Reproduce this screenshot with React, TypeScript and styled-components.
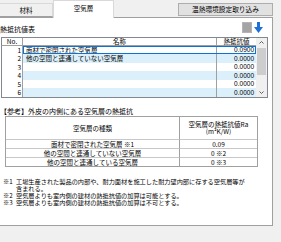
import React from 'react';
import styled, { createGlobalStyle } from 'styled-components';

const GlobalStyle = createGlobalStyle`
  html, body {
    margin: 0;
    padding: 0;
    background: #f0f0f0;
  }
  body {
    font-family: "Noto Sans CJK JP", "Noto Sans", sans-serif;
    color: #000;
  }
`;

const Screen = styled.div`
  width: 281px;
  height: 242px;
  overflow: hidden;
  background: #f0f0f0;
`;

const TabStrip = styled.div`
  display: flex;
  align-items: flex-end;
  height: 17px;
`;

const Tab = styled.div<{ $active?: boolean }>`
  box-sizing: border-box;
  position: relative;
  z-index: ${(p) => (p.$active ? 2 : 1)};
  width: ${(p) => (p.$active ? 61 : 54)}px;
  height: ${(p) => (p.$active ? 18 : 14)}px;
  margin-bottom: ${(p) => (p.$active ? -1 : 0)}px;
  margin-left: ${(p) => (p.$active ? 0 : -1)}px;
  border: 1px solid #d9d9d9;
  border-bottom: ${(p) => (p.$active ? 'none' : '1px solid #a0a0a0')};
  background: ${(p) => (p.$active ? '#fff' : '#f0f0f0')};
  font-size: 6.5px;
  line-height: 7px;
  display: flex;
  align-items: center;
  justify-content: center;
  padding-bottom: ${(p) => (p.$active ? 3 : 0)}px;
`;

const ImportButton = styled.div`
  box-sizing: border-box;
  align-self: flex-start;
  margin: 3px 8px 0 auto;
  width: 95px;
  height: 13px;
  border: 1px solid #adadad;
  background: #e1e1e1;
  font-size: 6.7px;
  line-height: 11px;
  text-align: center;
`;

const Panel = styled.div`
  box-sizing: border-box;
  position: relative;
  width: 273px;
  height: 209px;
  border: 1px solid #a0a0a0;
  border-left: none;
  background: #fff;
  display: flex;
  flex-direction: column;
`;

const LabelRow = styled.div`
  display: flex;
  justify-content: space-between;
  height: 19px;
`;

const Label = styled.div`
  align-self: flex-end;
  font-size: 7px;
  line-height: 7px;
  margin-bottom: 4px;
`;

const IconGroup = styled.div`
  display: flex;
  gap: 2px;
  margin: 4px 9px 0 0;
`;

const GrayBox = styled.div`
  box-sizing: border-box;
  width: 10px;
  height: 11px;
  background: #a4a4a4;
  border: 1px solid #b4b4b4;
`;

const GridFrame = styled.div`
  box-sizing: border-box;
  margin-left: 1px;
  width: 267px;
  height: 61px;
  border: 1px solid #828790;
  display: flex;
`;

const Grid = styled.div`
  flex: 1;
  display: flex;
  flex-direction: column;
`;

const HeaderRow = styled.div`
  display: grid;
  grid-template-columns: 21px 194px 1fr;
  height: 8px;
  box-sizing: border-box;
  border-bottom: 1px solid #a0a0a0;
  font-size: 6.5px;
  line-height: 7px;
`;

const HeadCell = styled.div<{ $last?: boolean }>`
  border-right: ${(p) => (p.$last ? 'none' : '1px solid #a0a0a0')};
  text-align: center;
  white-space: nowrap;
`;

const Row = styled.div`
  display: grid;
  grid-template-columns: 21px 1fr;
  height: 8px;
  font-size: 6.5px;
  line-height: 8px;
  &:nth-child(odd) {
    height: 9px;
    line-height: 9px;
  }
`;

const NoCell = styled.div`
  border-right: 1px solid #a0a0a0;
  text-align: right;
  padding-right: 1px;
`;

const RowBody = styled.div<{ $alt?: boolean; $selected?: boolean }>`
  display: grid;
  grid-template-columns: 194px 1fr;
  background: ${(p) => (p.$alt ? '#dcf0fb' : '#fff')};
  outline: ${(p) => (p.$selected ? '1px solid #0a74d6' : 'none')};
  outline-offset: -1px;
`;

const NameCell = styled.div`
  border-right: 1px solid #a0a0a0;
  padding-left: 3px;
  white-space: nowrap;
`;

const ValueCell = styled.div`
  text-align: right;
  padding-right: 2px;
  font-family: "Liberation Sans", sans-serif;
`;

const ScrollBar = styled.div`
  width: 11px;
  background: #f0f0f0;
  display: flex;
  flex-direction: column;
  align-items: center;
`;

const ScrollArrow = styled.div`
  height: 9px;
  display: flex;
  align-items: center;
  justify-content: center;
`;

const Thumb = styled.div`
  width: 9px;
  height: 27px;
  margin-top: 1px;
  background: #cdcdcd;
`;

const TrackFill = styled.div`
  flex: 1;
`;

const RefTitle = styled.div`
  margin-top: 10px;
  font-size: 7px;
  line-height: 7px;
  white-space: nowrap;
`;

const RefTable = styled.div`
  box-sizing: border-box;
  margin: 1px 0 0 5px;
  width: 253px;
  border: 1px solid #a0a0a0;
  display: grid;
  grid-template-columns: 174px 1fr;
  grid-template-rows: 23px 9px 9px 8px;
  font-size: 6.5px;
`;

const RefCell = styled.div<{ $last?: boolean; $bottom?: boolean }>`
  box-sizing: border-box;
  border-right: ${(p) => (p.$last ? 'none' : '1px solid #a0a0a0')};
  border-bottom: ${(p) => (p.$bottom ? 'none' : '1px solid #c8c8c8')};
  display: flex;
  flex-direction: column;
  align-items: center;
  justify-content: center;
  line-height: 7px;
  white-space: nowrap;
  background: #fff;
`;

const Notes = styled.div`
  margin-top: 11px;
  padding-left: 3px;
  display: grid;
  grid-template-columns: 13px 1fr;
  font-size: 6.2px;
  line-height: 7px;
  white-space: nowrap;
`;

const DownArrow = () => (
  <svg width="9" height="11" viewBox="0 0 9 11">
    <rect x="3" y="0" width="3" height="5" fill="#1f6fd8" />
    <polygon points="0,5 9,5 4.5,11" fill="#1f6fd8" />
  </svg>
);

const Chevron = ({ up }: { up?: boolean }) => (
  <svg width="5" height="3" viewBox="0 0 5 3">
    <polyline
      points={up ? '0.5,2.5 2.5,0.5 4.5,2.5' : '0.5,0.5 2.5,2.5 4.5,0.5'}
      fill="none"
      stroke="#606060"
      strokeWidth="1"
    />
  </svg>
);

const rows = [
  { no: 1, name: '面材で密閉された空気層', value: '0.0900' },
  { no: 2, name: '他の空間と連通していない空気層', value: '0.0000' },
  { no: 3, name: '', value: '0.0000' },
  { no: 4, name: '', value: '0.0000' },
  { no: 5, name: '', value: '0.0000' },
  { no: 6, name: '', value: '0.0000' },
];

const refRows = [
  { kind: '面材で密閉された空気層 ※1', value: '0.09' },
  { kind: '他の空間と連通していない空気層', value: '0 ※2' },
  { kind: '他の空間と連通している空気層', value: '0 ※3' },
];

export default function App() {
  return (
    <Screen>
      <GlobalStyle />
      <TabStrip>
        <Tab>材料</Tab>
        <Tab $active>空気層</Tab>
        <ImportButton>温熱環境設定取り込み</ImportButton>
      </TabStrip>
      <Panel>
        <LabelRow>
          <Label>熱抵抗値表</Label>
          <IconGroup>
            <GrayBox />
            <DownArrow />
          </IconGroup>
        </LabelRow>
        <GridFrame>
          <Grid>
            <HeaderRow>
              <HeadCell>No.</HeadCell>
              <HeadCell>名称</HeadCell>
              <HeadCell $last>熱抵抗値</HeadCell>
            </HeaderRow>
            {rows.map((r, i) => (
              <Row key={r.no}>
                <NoCell>{r.no}</NoCell>
                <RowBody $alt={i % 2 === 1} $selected={i === 0}>
                  <NameCell>{r.name}</NameCell>
                  <ValueCell>{r.value}</ValueCell>
                </RowBody>
              </Row>
            ))}
          </Grid>
          <ScrollBar>
            <ScrollArrow>
              <Chevron up />
            </ScrollArrow>
            <Thumb />
            <TrackFill />
            <ScrollArrow>
              <Chevron />
            </ScrollArrow>
          </ScrollBar>
        </GridFrame>
        <RefTitle>【参考】外皮の内側にある空気層の熱抵抗</RefTitle>
        <RefTable>
          <RefCell>空気層の種類</RefCell>
          <RefCell $last>
            <span>空気層の熱抵抗値Ra</span>
            <span>(m²K/W)</span>
          </RefCell>
          {refRows.map((r, i) => (
            <React.Fragment key={r.kind}>
              <RefCell $bottom={i === refRows.length - 1}>{r.kind}</RefCell>
              <RefCell $last $bottom={i === refRows.length - 1}>
                {r.value}
              </RefCell>
            </React.Fragment>
          ))}
        </RefTable>
        <Notes>
          <span>※1</span>
          <span>
            工場生産された製品の内部や、耐力面材を施工した耐力壁内部に存する空気層等が
          </span>
          <span />
          <span>含まれる。</span>
          <span>※2</span>
          <span>空気層よりも室内側の建材の熱抵抗値の加算は可能とする。</span>
          <span>※3</span>
          <span>空気層よりも室内側の建材の熱抵抗値の加算は不可とする。</span>
        </Notes>
      </Panel>
    </Screen>
  );
}
